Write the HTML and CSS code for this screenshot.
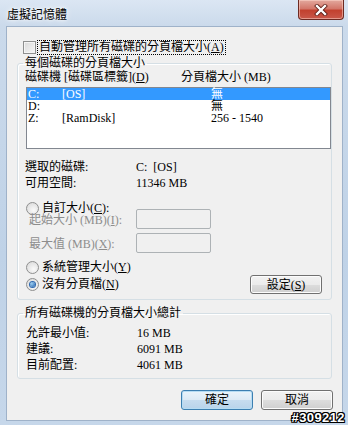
FILE: index.html
```html
<!DOCTYPE html>
<html lang="zh-Hant">
<head>
  <meta charset="UTF-8">
  <title>虛擬記憶體</title>
  <link rel="stylesheet" href="styles.css">
</head>
<body>

  <div class="window">
    <div class="titlebar">
      <span class="title">虛擬記憶體</span>
      <span class="close">
        <svg width="14" height="12" viewBox="0 0 14 12">
          <path d="M3 2 L11 10 M11 2 L3 10" stroke="#5a1a12" stroke-width="4" stroke-linecap="square"/>
          <path d="M3 2 L11 10 M11 2 L3 10" stroke="#fff" stroke-width="2.4" stroke-linecap="square"/>
        </svg>
      </span>
    </div>

    <div class="client">
      <div class="auto-row">
        <span class="checkbox"></span>
        <span class="focus">自動管理所有磁碟的分頁檔大小(<u>A</u>)</span>
      </div>

      <fieldset class="group">
        <legend>每個磁碟的分頁檔大小</legend>
        <div class="list-head">
          <span>磁碟機 [磁碟區標籤](<u>D</u>)</span>
          <span>分頁檔大小 (MB)</span>
        </div>
        <ul class="drive-list">
          <li class="selected"><span>C:</span><span>[OS]</span><span>無</span></li>
          <li><span>D:</span><span></span><span>無</span></li>
          <li><span>Z:</span><span>[RamDisk]</span><span>256 - 1540</span></li>
        </ul>

        <div class="info">
          <span>選取的磁碟:</span><span>C:&nbsp; [OS]</span>
          <span>可用空間:</span><span>11346 MB</span>
        </div>

        <div class="radio-row custom">
          <span class="radio"></span><span>自訂大小(<u>C</u>):</span>
        </div>
        <div class="size-rows">
          <span class="disabled">起始大小 (MB)(<u>I</u>):</span><span class="field"></span>
          <span class="disabled">最大值 (MB)(<u>X</u>):</span><span class="field"></span>
        </div>
        <div class="radio-row system">
          <span class="radio"></span><span>系統管理大小(<u>Y</u>)</span>
        </div>
        <div class="radio-row none">
          <span class="radio checked"></span><span>沒有分頁檔(<u>N</u>)</span>
          <button class="btn set">設定(<u>S</u>)</button>
        </div>
      </fieldset>

      <fieldset class="group totals">
        <legend>所有磁碟機的分頁檔大小總計</legend>
        <div class="total-rows">
          <span>允許最小值:</span><span>16 MB</span>
          <span>建議:</span><span>6091 MB</span>
          <span>目前配置:</span><span>4061 MB</span>
        </div>
      </fieldset>

      <div class="actions">
        <button class="btn default">確定</button>
        <button class="btn">取消</button>
      </div>
    </div>

    <span class="stamp">#309212</span>
  </div>

</body>
</html>
```

FILE: styles.css
```css
body { margin: 0; font-family: "Liberation Serif", "Noto Sans CJK TC", serif; font-size: 12px; color: #000; }
u { text-decoration: underline; text-underline-offset: 1px; }

.window {
  position: relative; width: 348px; height: 425px; box-sizing: border-box;
  padding: 0 5px 4px 6px; display: flex; flex-direction: column;
  background: linear-gradient(180deg, #dbe6f3 0, #cbdaeb 26px, #bfd2e7 60%, #c6d7ea 100%);
}

.titlebar { height: 26px; display: flex; justify-content: space-between; align-items: flex-start; }
.title { padding: 6px 0 0 1px; line-height: 16px; font-family: "Noto Sans CJK TC", sans-serif; text-shadow: 0 0 6px #fff, 0 0 3px #fff; }
.close {
  width: 46px; height: 20px; box-sizing: border-box; margin-right: -1px;
  display: flex; align-items: center; justify-content: center;
  border: 1px solid #6d2a22; border-top: none; border-radius: 0 0 4px 4px;
  background: linear-gradient(180deg, #e3a99e 0, #d3776a 45%, #c2412f 55%, #c9584a 100%);
  box-shadow: inset 0 0 0 1px rgba(255,220,210,0.5);
}

.client {
  flex: 1; background: #f0f0f0; border: 1px solid #9fb2c9;
  padding: 12px 10px 0 10px; display: flex; flex-direction: column;
}

.auto-row { height: 16px; display: flex; align-items: center; margin-left: 6px; line-height: 14px; }
.checkbox {
  width: 13px; height: 13px; box-sizing: border-box; border: 1px solid #8e8f8f;
  background: linear-gradient(135deg, #d9d9d9, #f6f6f6); box-shadow: inset 0 0 0 1px #f4f4f4;
}
.focus { margin-left: 1px; padding: 0 1px; border: 1px dotted #000; line-height: 13px; }

.group { margin: 0; padding: 0 0 5px 8px; border: 1px solid #d5dfe5; border-radius: 3px; box-shadow: inset 1px 1px 0 #fff; }
.group legend { padding: 0 2px; margin-left: -3px; line-height: 16px; }

.list-head { display: grid; grid-template-columns: 156px auto; margin: -1px 0 0 -1px; line-height: 14px; }

.drive-list {
  list-style: none; margin: 3px 0 0; padding: 0; width: 305px; height: 62px; box-sizing: border-box;
  border: 1px solid #828790; background: #fff;
}
.drive-list li { display: grid; grid-template-columns: 34px 149px auto; line-height: 12px; padding-left: 1px; }
.drive-list li.selected { background: #3399ff; color: #fff; }

.info { display: grid; grid-template-columns: 111px auto; margin: 10px 0 0 -1px; line-height: 16px; }

.radio-row { display: flex; align-items: center; line-height: 15px; }
.radio-row.custom { margin-top: 9px; height: 16px; }
.radio-row.system { margin-top: 7px; }
.radio-row.none { height: 19px; padding-right: 9px; }
.radio {
  width: 13px; height: 13px; box-sizing: border-box; margin-right: 3px; border-radius: 50%;
  border: 1px solid #8e8f8f; background: radial-gradient(circle at 60% 65%, #fafafa, #d6d6d6);
  display: flex; align-items: center; justify-content: center;
}
.radio.checked::after {
  content: ""; width: 5px; height: 5px; border-radius: 50%;
  background: radial-gradient(circle at 35% 35%, #9cd0f3, #1d5aa5); box-shadow: 0 0 0 1px #2c68b0;
}

.size-rows { display: grid; grid-template-columns: 107px 75px; row-gap: 4px; margin: -7px 0 0 3px; align-items: center; }
.disabled { color: #8d8d8d; }
.field { height: 20px; box-sizing: border-box; border: 1px solid #adb2b5; border-radius: 2px; background: #f0f0f0; }

.btn {
  font: inherit; color: #000; height: 20px; padding: 0; box-sizing: border-box;
  border: 1px solid #707070; border-radius: 3px;
  background: linear-gradient(180deg, #f2f2f2 0, #ebebeb 50%, #dddddd 51%, #cfcfcf 100%);
  box-shadow: inset 0 0 0 1px #fcfcfc; line-height: 16px;
}
.btn.set { margin-left: auto; width: 72px; height: 19px; }

.totals { margin-top: 5px; }
.total-rows { display: grid; grid-template-columns: 111px auto; margin-top: 4px; line-height: 16px; }

.actions { display: flex; justify-content: flex-end; gap: 8px; margin: 11px -1px 0 0; }
.actions .btn { width: 72px; }
.btn.default {
  border-color: #3c7fb1;
  background: linear-gradient(180deg, #eaf4fb 0, #dceaf5 50%, #c6dcef 51%, #b8d3ea 100%);
  box-shadow: inset 0 0 0 1px #b6dcf3;
}

.stamp {
  position: absolute; right: 3px; bottom: 1px; font-family: "Liberation Sans", sans-serif;
  font-weight: bold; font-size: 13px; line-height: 13px; color: #fff; letter-spacing: 0.4px;
  text-shadow: 1px 0 0 #000, -1px 0 0 #000, 0 1px 0 #000, 0 -1px 0 #000, 1px 1px 0 #000, -1px -1px 0 #000, 1px -1px 0 #000, -1px 1px 0 #000;
}
```
